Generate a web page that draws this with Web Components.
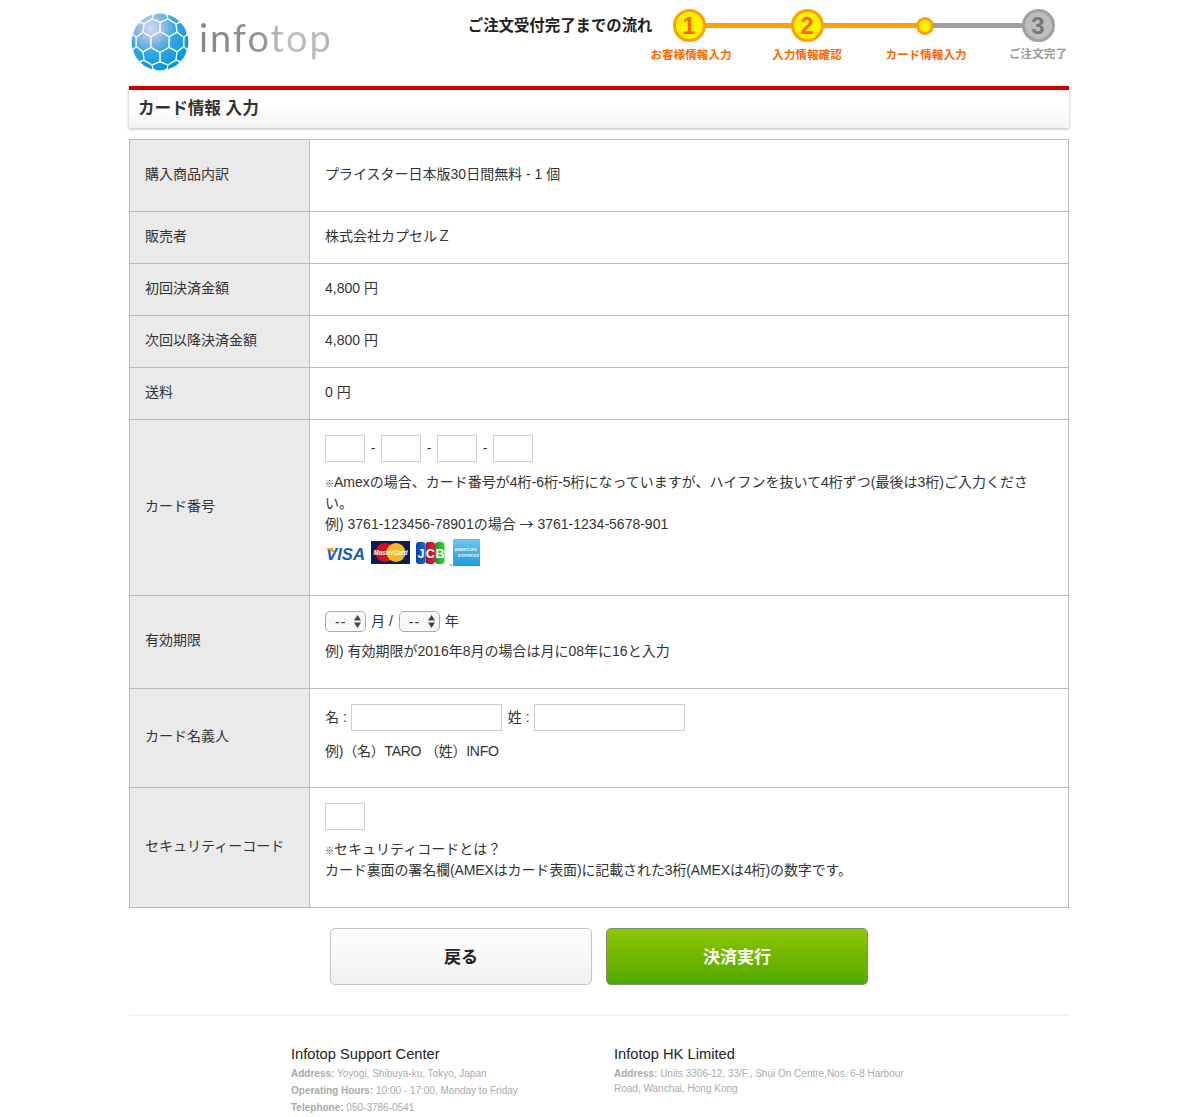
<!DOCTYPE html>
<html lang="ja">
<head>
<meta charset="utf-8">
<title>カード情報 入力</title>
<style>
  html, body { margin: 0; background: #fff; }
  body {
    font-family: "Liberation Sans", "Noto Sans CJK JP", sans-serif;
    font-size: 14px;
    line-height: 21px;
    color: #333;
  }
  .page { width: 940px; margin: 0 auto; }
  .line { display: flex; align-items: center; gap: 5px; }
  p { margin: 0; }
  .mark { display: inline-block; width: 9px; font-size: 9px; line-height: 0; font-weight: bold; vertical-align: baseline; }
  .arrow { font-family: "Noto Sans CJK JP", sans-serif; line-height: 0; }
  .tight { letter-spacing: -0.25px; }
  .tight2 { letter-spacing: -0.12px; }
</style>
</head>
<body>
<div class="page">
  <it-header>
    <it-logo></it-logo>
    <it-stepper></it-stepper>
  </it-header>
  <it-title>カード情報 入力</it-title>
  <it-table>
    <it-row label="購入商品内訳" top="24" bottom="26">プライスター日本版30日間無料 - 1 個</it-row>
    <it-row label="販売者">株式会社カプセルＺ</it-row>
    <it-row label="初回決済金額">4,800 円</it-row>
    <it-row label="次回以降決済金額">4,800 円</it-row>
    <it-row label="送料">0 円</it-row>
    <it-row label="カード番号" top="15" bottom="29">
      <div class="line" style="gap:5.7px">
        <it-input width="40"></it-input>-<it-input width="40"></it-input>-<it-input width="40"></it-input>-<it-input width="40"></it-input>
      </div>
      <p style="margin-top:10px; height:42px"><span class="mark">※</span>Amexの場合、カード番号が4桁-6桁-5桁になっていますが、ハイフンを抜いて4桁ずつ(最後は3桁)ご入力くださ<br>い。</p>
      <p style="height:21px">例) 3761-123456-78901の場合 <span class="arrow">→</span> 3761-1234-5678-901</p>
      <it-cards></it-cards>
    </it-row>
    <it-row label="有効期限" top="15" bottom="26" lift="3">
      <div class="line"><it-select></it-select><span style="margin-right:1px">月 /</span><it-select></it-select><span>年</span></div>
      <p style="margin-top:9px">例) 有効期限が2016年8月の場合は月に08年に16と入力</p>
    </it-row>
    <it-row label="カード名義人" top="15" bottom="25" lift="3">
      <div class="line" style="gap:4px">名 : <it-input width="151"></it-input><span style="margin-left:2px">姓 :</span><it-input width="151"></it-input></div>
      <p class="tight" style="margin-top:10px">例)（名）TARO （姓）INFO</p>
    </it-row>
    <it-row label="セキュリティーコード" top="15" bottom="26">
      <it-input width="40"></it-input>
      <p style="margin-top:9px; height:21px"><span class="mark">※</span>セキュリティコードとは？</p>
      <p class="tight2">カード裏面の署名欄(AMEXはカード表面)に記載された3桁(AMEXは4桁)の数字です。</p>
    </it-row>
  </it-table>
  <it-actions>
    <it-button>戻る</it-button>
    <it-button kind="go">決済実行</it-button>
  </it-actions>
  <it-footer>
    <it-office name="Infotop Support Center">
      <div><b>Address:</b> Yoyogi, Shibuya-ku, Tokyo, Japan</div>
      <div><b>Operating Hours:</b> 10:00 - 17:00, Monday to Friday</div>
      <div><b>Telephone:</b> 050-3786-0541</div>
    </it-office>
    <it-office name="Infotop HK Limited">
      <div><b>Address:</b> Units 3306-12, 33/F., Shui On Centre,Nos. 6-8 Harbour<br>Road, Wanchai, Hong Kong</div>
    </it-office>
  </it-footer>
</div>

<script>
class Base extends HTMLElement {
  connectedCallback() {
    if (this.shadowRoot) return;
    this.attachShadow({ mode: 'open' });
    this.shadowRoot.innerHTML = this.render();
    if (this.ready) this.ready();
  }
}

class ItHeader extends Base {
  render() {
    return `
      <style>
        :host { display: flex; justify-content: space-between; height: 86px; }
      </style>
      <slot></slot>
    `;
  }
}

class ItLogo extends Base {
  render() {
    return `
      <style>
        :host { display: flex; align-items: flex-start; padding: 13px 0 0 2px; }
        svg { display: block; width: 58px; height: 58px; }
        span {
          margin: -1px 0 0 10px;
          font: 400 38px/50px Lato, "Liberation Sans", sans-serif;
          letter-spacing: 1.9px;
          background: linear-gradient(90deg, #858585 0%, #959595 48%, #c0c0c0 62%, #b6b6b6 100%);
          -webkit-background-clip: text;
          background-clip: text;
          color: transparent;
        }
      </style>
      <svg viewBox="0 0 58 58">
        <defs>
          <radialGradient id="g" cx="0.34" cy="0.26" r="0.72">
            <stop offset="0" stop-color="#d5dcf2"/>
            <stop offset="0.28" stop-color="#9dbde8"/>
            <stop offset="0.6" stop-color="#35a6e6"/>
            <stop offset="1" stop-color="#0c98dc"/>
          </radialGradient>
          <clipPath id="c"><circle cx="29" cy="29" r="28.5"/></clipPath>
        </defs>
        <circle cx="29" cy="29" r="28.5" fill="url(#g)"/>
        <g id="mesh" clip-path="url(#c)" fill="none" stroke="#fff" stroke-width="1.1" stroke-opacity=".9"></g>
      </svg>
      <span>infotop</span>
    `;
  }

  // hex mesh bulged out a little so it reads as a ball
  ready() {
    const mesh = this.shadowRoot.getElementById('mesh');
    const size = 8.6;
    const w = Math.sqrt(3) * size;
    const bulge = (x, y) => {
      const dx = x - 29, dy = y - 29;
      const r = Math.hypot(dx, dy);
      if (!r) return [29, 29];
      const k = 29.5 * Math.sin(Math.min(r / 37, 1) * Math.PI / 2) / r;
      return [29 + dx * k, 29 + dy * k];
    };
    let out = '';
    for (let row = -3; row <= 3; row++) {
      for (let col = -3; col <= 3; col++) {
        const cx = 29 + (col + (row & 1 ? 0.5 : 0)) * w;
        const cy = 29 + row * size * 1.5;
        const pts = [];
        for (let i = 0; i < 6; i++) {
          const a = Math.PI / 6 + i * Math.PI / 3;
          pts.push(bulge(cx + size * Math.cos(a), cy + size * Math.sin(a)).map(n => n.toFixed(1)).join(','));
        }
        out += `<polygon points="${pts.join(' ')}"/>`;
      }
    }
    mesh.innerHTML = out;
  }
}

class ItStepper extends Base {
  render() {
    return `
      <style>
        :host { display: flex; align-items: flex-start; padding-top: 9px; margin-right: -23px; }
        h2 { margin: 7px 0 0 0; font-size: 15.4px; line-height: 20px; font-weight: bold; color: #222; white-space: nowrap; }
        .steps { display: flex; margin-left: -22.5px; }
        .step { position: relative; display: flex; flex-direction: column; align-items: center; width: 118px; }
        .step.last { width: 108px; }
        .dot {
          position: relative; z-index: 1; box-sizing: border-box;
          width: 33px; height: 33px; border-radius: 50%;
          border: 3px solid #ff9f00; background: #fff100; color: #f60;
          display: flex; align-items: center; justify-content: center;
          font: bold 24px/1 "Liberation Sans", sans-serif;
        }
        .holder { height: 33px; display: flex; align-items: center; }
        .dot.small { width: 18px; height: 18px; }
        .off .dot { border-color: #a0a0a0; background: #bdbdbd; color: #777; }
        .bar { position: absolute; left: 50%; top: 14px; height: 5px; background: #ff9f00; }
        .bar.off { background: #a0a0a0; }
        .label { margin-top: 4px; font-size: 11.6px; line-height: 18px; font-weight: bold; color: #f60; white-space: nowrap; }
        .off .label { color: #999; }
      </style>
      <h2>ご注文受付完了までの流れ</h2>
      <div class="steps">
        <div class="step"><span class="bar" style="width:118px"></span><div class="holder"><div class="dot">1</div></div><div class="label" style="margin-left:4px">お客様情報入力</div></div>
        <div class="step"><span class="bar" style="width:118px"></span><div class="holder"><div class="dot">2</div></div><div class="label">入力情報確認</div></div>
        <div class="step"><span class="bar off" style="width:113px"></span><div class="holder"><div class="dot small"></div></div><div class="label" style="margin-left:2px">カード情報入力</div></div>
        <div class="step last off"><div class="holder"><div class="dot">3</div></div><div class="label" style="margin-top:3px">ご注文完了</div></div>
      </div>
    `;
  }
}

class ItTitle extends Base {
  render() {
    return `
      <style>
        :host {
          display: block; box-sizing: border-box; height: 42px;
          border-top: 4px solid #c00;
          padding: 0 9px;
          font-size: 16.6px; line-height: 38px; font-weight: bold; color: #333;
          background: linear-gradient(#fff 40%, #f3f3f3);
          box-shadow: 0 1px 3px rgba(0,0,0,.3);
        }
      </style>
      <slot></slot>
    `;
  }
}

class ItTable extends Base {
  render() {
    return `
      <style>
        :host { display: block; margin-top: 11px; border: 1px solid #bbb; border-top: 0; }
      </style>
      <slot></slot>
    `;
  }
}

class ItRow extends Base {
  render() {
    const top = this.getAttribute('top') || 14;
    const bottom = this.getAttribute('bottom') || 16;
    const lift = this.getAttribute('lift') || 2;
    return `
      <style>
        :host { display: grid; grid-template-columns: 180px 1fr; border-top: 1px solid #bbb; }
        .label { display: flex; align-items: center; padding: 0 15px ${lift}px; background: #eaeaea; border-right: 1px solid #bbb; }
        .value { padding: ${top}px 39px ${bottom}px 15px; min-width: 0; }
      </style>
      <div class="label">${this.getAttribute('label')}</div>
      <div class="value"><slot></slot></div>
    `;
  }
}

class ItInput extends Base {
  render() {
    return `
      <style>
        :host { display: block; flex: none; }
        input {
          display: block; box-sizing: border-box;
          width: ${this.getAttribute('width')}px; height: 27px; margin: 0; padding: 2px 4px;
          border: 1px solid #ccc; border-radius: 0; background: #fff; outline: 0;
        }
      </style>
      <input type="text">
    `;
  }
}

class ItSelect extends Base {
  render() {
    return `
      <style>
        :host { display: block; position: relative; flex: none; width: 41px; height: 21px; }
        select {
          appearance: none; -webkit-appearance: none;
          display: block; box-sizing: border-box; width: 100%; height: 100%; margin: 0; padding: 0 0 0 9px;
          border: 1px solid #aaa; border-radius: 5px; background: #f8f8f8;
          font: 14px "Liberation Sans", sans-serif; letter-spacing: 1px; color: #333; outline: 0;
        }
        svg { position: absolute; right: 5px; top: 4px; pointer-events: none; }
      </style>
      <select><option>--</option></select>
      <svg width="7" height="13" viewBox="0 0 7 13"><path d="M3.5 0 7 5.5H0zM3.5 13 0 7.5h7z" fill="#444"/></svg>
    `;
  }
}

class ItCards extends Base {
  render() {
    return `
      <style>
        :host { display: flex; align-items: flex-start; gap: 6px; margin-top: 5px; height: 26px; }
        svg { display: block; flex: none; }
        text { font-family: "Liberation Sans", sans-serif; }
      </style>
      <svg width="40" height="26" viewBox="0 0 40 26">
        <text x="1" y="20" font-size="16.5" font-weight="bold" font-style="italic" fill="#1a5cb4" textLength="39" lengthAdjust="spacingAndGlyphs">VISA</text>
        <path d="M1 8h7l2 6z" fill="#f0a030"/>
      </svg>
      <svg width="39" height="26" viewBox="0 0 39 26">
        <rect y="1" width="39" height="23" fill="#0b1c56"/>
        <circle cx="14" cy="12.5" r="9.5" fill="#d6101f"/>
        <circle cx="25" cy="12.5" r="9.5" fill="#f7b722"/>
        <text x="19.5" y="15" text-anchor="middle" font-size="6.6" font-weight="bold" font-style="italic" fill="#fff" textLength="34" lengthAdjust="spacingAndGlyphs">MasterCard</text>
      </svg>
      <svg width="29" height="26" viewBox="0 0 29 26">
        <defs>
          <linearGradient id="jb" x1="0" y1="0" x2="1" y2="0"><stop offset="0" stop-color="#0a3fae"/><stop offset="1" stop-color="#0f6fe0"/></linearGradient>
          <linearGradient id="jr" x1="0" y1="0" x2="1" y2="0"><stop offset="0" stop-color="#a50f2a"/><stop offset="1" stop-color="#e0203a"/></linearGradient>
          <linearGradient id="jg" x1="0" y1="0" x2="1" y2="0"><stop offset="0" stop-color="#119a2a"/><stop offset="1" stop-color="#44cc33"/></linearGradient>
        </defs>
        <rect y="2" width="9.5" height="22" rx="3" fill="url(#jb)"/>
        <rect x="9.5" y="2" width="9.5" height="22" rx="3" fill="url(#jr)"/>
        <rect x="19" y="2" width="9.5" height="22" rx="3" fill="url(#jg)"/>
        <text x="5" y="18" text-anchor="middle" font-size="12.5" font-weight="bold" fill="#fff">J</text>
        <text x="14.3" y="18" text-anchor="middle" font-size="12.5" font-weight="bold" fill="#fff">C</text>
        <text x="24" y="18" text-anchor="middle" font-size="12.5" font-weight="bold" fill="#fff">B</text>
      </svg>
      <svg width="30" height="27" viewBox="0 0 30 27" style="margin:-1px 0 0 -1px">
        <defs>
          <linearGradient id="ax" x1="0" y1="0" x2="0" y2="1">
            <stop offset="0" stop-color="#6cc6f0"/>
            <stop offset="1" stop-color="#1c9ce0"/>
          </linearGradient>
        </defs>
        <rect x="3" width="27" height="27" fill="url(#ax)"/>
        <circle cx="1" cy="26" r="1" fill="#5ab0e0"/>
        <text x="4.5" y="12" font-size="4.4" font-weight="bold" fill="#e6f6ff" textLength="22" lengthAdjust="spacingAndGlyphs">AMERICAN</text>
        <text x="8" y="18" font-size="4.4" font-weight="bold" fill="#e6f6ff" textLength="21" lengthAdjust="spacingAndGlyphs">EXPRESS</text>
      </svg>
    `;
  }
}

class ItActions extends Base {
  render() {
    return `
      <style>
        :host { display: flex; justify-content: center; gap: 14px; margin-top: 20px; }
      </style>
      <slot></slot>
    `;
  }
}

class ItButton extends Base {
  render() {
    const go = this.getAttribute('kind') === 'go';
    return `
      <style>
        :host { display: block; }
        button {
          display: block; box-sizing: border-box; width: 262px; height: 57px; padding: 0 0 2px;
          border-radius: 5px;
          font: bold 17px "Liberation Sans", "Noto Sans CJK JP", sans-serif;
          border: 1px solid ${go ? '#7f8f70' : '#c4c4c4'};
          color: ${go ? '#fff' : '#222'};
          background: ${go ? 'linear-gradient(#8fc800, #52a800)' : 'linear-gradient(#fff, #f0f0f0)'};
        }
      </style>
      <button><slot></slot></button>
    `;
  }
}

class ItFooter extends Base {
  render() {
    return `
      <style>
        :host { display: flex; margin-top: 30px; padding: 29px 0 0 162px; border-top: 1px solid #eee; }
      </style>
      <slot></slot>
    `;
  }
}

class ItOffice extends Base {
  render() {
    return `
      <style>
        :host { display: block; box-sizing: border-box; width: 323px; padding-right: 30px; font-size: 10px; line-height: 15px; color: #aaa; }
        h3 { margin: 0 0 3px; font-size: 14.7px; line-height: 18px; font-weight: normal; color: #222; }
        ::slotted(div) { margin-bottom: 2px; }
      </style>
      <h3>${this.getAttribute('name')}</h3>
      <slot></slot>
    `;
  }
}

customElements.define('it-header', ItHeader);
customElements.define('it-logo', ItLogo);
customElements.define('it-stepper', ItStepper);
customElements.define('it-title', ItTitle);
customElements.define('it-table', ItTable);
customElements.define('it-row', ItRow);
customElements.define('it-input', ItInput);
customElements.define('it-select', ItSelect);
customElements.define('it-cards', ItCards);
customElements.define('it-actions', ItActions);
customElements.define('it-button', ItButton);
customElements.define('it-footer', ItFooter);
customElements.define('it-office', ItOffice);
</script>
</body>
</html>
